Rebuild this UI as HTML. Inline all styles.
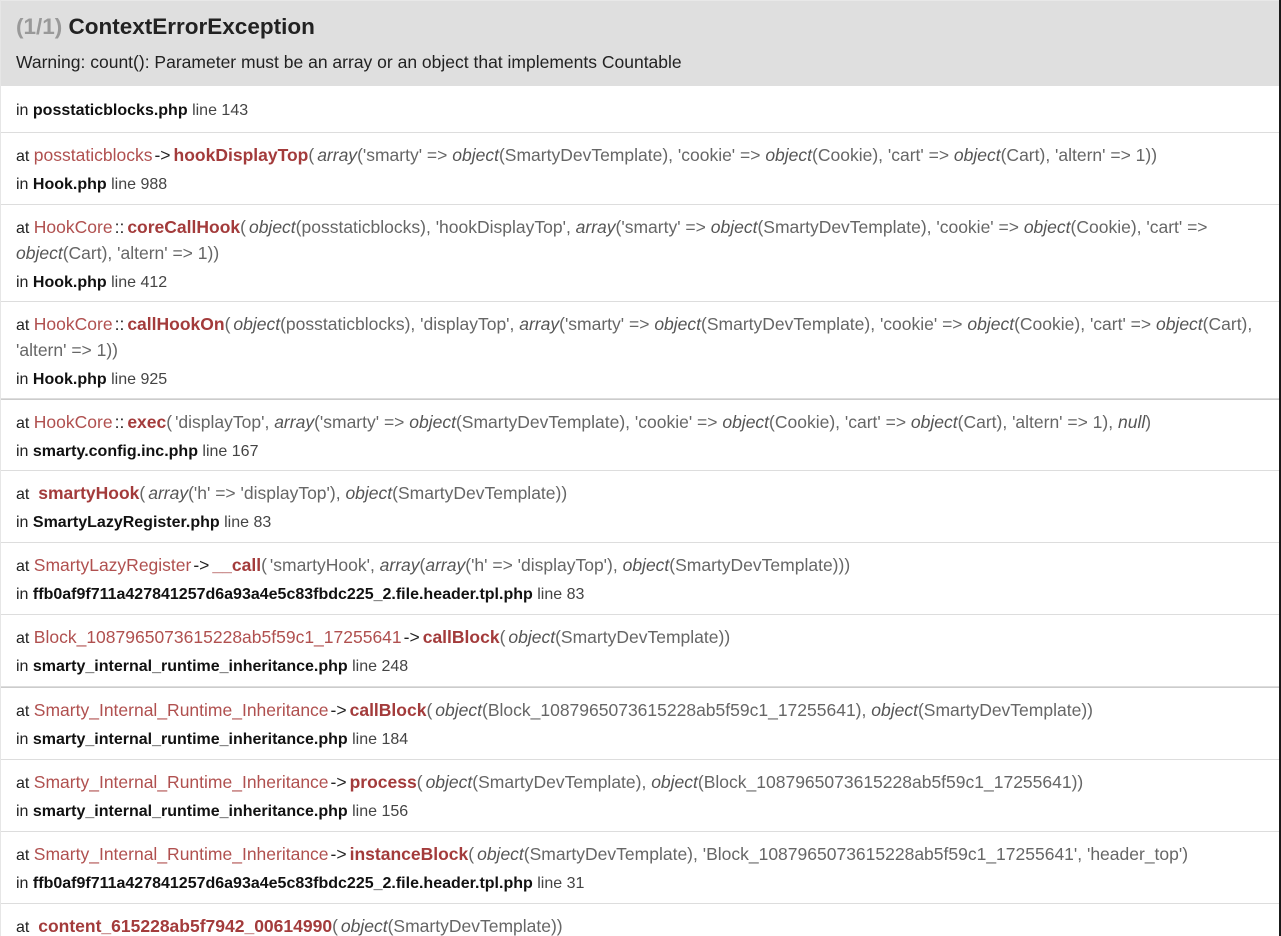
<!DOCTYPE html>
<html><head><meta charset="utf-8"><style>
*{margin:0;padding:0;box-sizing:border-box}
html,body{width:1281px;height:936px;overflow:hidden;background:#fff}
body{font-family:"Liberation Sans",Arial,sans-serif;font-size:16px;color:#222;position:relative}
.wrap{position:absolute;left:0;top:0;width:1281px;height:936px;border-left:1px solid #e6e6e6;border-right:2px solid #1a1a1a}
.hd{height:86px;background:#dfdfdf;padding:12px 0 0 15px;border-top:1px solid #e8e8e8}
.hd h1{font-size:22.5px;font-weight:bold;color:#222;line-height:28px}
.hd h1 span{color:#999}
.hd p{margin-top:10px;font-size:17.5px;line-height:22px;color:#222}
.r{border-bottom:1px solid #ddd;padding:10px 15px 0 15px;line-height:24px;overflow:hidden;white-space:nowrap}
.r .in{margin-top:4px}
.c{color:#b0504f;font-size:17.5px}
.f{color:#a33b3b;font-weight:bold;font-size:17.5px}
.a{color:#666;font-size:17.5px}
.a i{color:#555}
.ar{font-size:17.5px;color:#222;margin:0 3px 0 2px}
.p{margin-right:3px}
b{font-weight:bold;color:#111}
.ln{color:#444}
</style></head><body><div class="wrap">
<div class="hd"><h1><span>(1/1)</span> ContextErrorException</h1><p>Warning: count(): Parameter must be an array or an object that implements Countable</p></div>
<div class="r" style="height:47px;padding-top:13px">in <b>posstaticblocks.php</b> <span class="ln">line 143</span></div>
<div class="r" style="height:72px">at <span class="c">posstaticblocks</span><span class="ar">-&gt;</span><span class="f">hookDisplayTop</span><span class="a"><span class="p">(</span><i>array</i>('smarty' =&gt; <i>object</i>(SmartyDevTemplate), 'cookie' =&gt; <i>object</i>(Cookie), 'cart' =&gt; <i>object</i>(Cart), 'altern' =&gt; 1))</span><div class="in">in <b>Hook.php</b> <span class="ln">line 988</span></div></div>
<div class="r" style="height:97px">at <span class="c">HookCore</span><span class="ar">::</span><span class="f">coreCallHook</span><span class="a"><span class="p">(</span><i>object</i>(posstaticblocks), 'hookDisplayTop', <i>array</i>('smarty' =&gt; <i>object</i>(SmartyDevTemplate), 'cookie' =&gt; <i>object</i>(Cookie), 'cart' =&gt;<br><i>object</i>(Cart), 'altern' =&gt; 1))</span><div class="in">in <b>Hook.php</b> <span class="ln">line 412</span></div></div>
<div class="r" style="height:97px">at <span class="c">HookCore</span><span class="ar">::</span><span class="f">callHookOn</span><span class="a"><span class="p">(</span><i>object</i>(posstaticblocks), 'displayTop', <i>array</i>('smarty' =&gt; <i>object</i>(SmartyDevTemplate), 'cookie' =&gt; <i>object</i>(Cookie), 'cart' =&gt; <i>object</i>(Cart),<br>'altern' =&gt; 1))</span><div class="in">in <b>Hook.php</b> <span class="ln">line 925</span></div></div>
<div class="r" style="height:72px;border-top:1px solid #ccc">at <span class="c">HookCore</span><span class="ar">::</span><span class="f">exec</span><span class="a"><span class="p">(</span>'displayTop', <i>array</i>('smarty' =&gt; <i>object</i>(SmartyDevTemplate), 'cookie' =&gt; <i>object</i>(Cookie), 'cart' =&gt; <i>object</i>(Cart), 'altern' =&gt; 1), <i>null</i>)</span><div class="in">in <b>smarty.config.inc.php</b> <span class="ln">line 167</span></div></div>
<div class="r" style="height:72px">at &nbsp;<span class="f">smartyHook</span><span class="a"><span class="p">(</span><i>array</i>('h' =&gt; 'displayTop'), <i>object</i>(SmartyDevTemplate))</span><div class="in">in <b>SmartyLazyRegister.php</b> <span class="ln">line 83</span></div></div>
<div class="r" style="height:72px">at <span class="c">SmartyLazyRegister</span><span class="ar">-&gt;</span><span class="f">__call</span><span class="a"><span class="p">(</span>'smartyHook', <i>array</i>(<i>array</i>('h' =&gt; 'displayTop'), <i>object</i>(SmartyDevTemplate)))</span><div class="in">in <b>ffb0af9f711a427841257d6a93a4e5c83fbdc225_2.file.header.tpl.php</b> <span class="ln">line 83</span></div></div>
<div class="r" style="height:72px">at <span class="c">Block_1087965073615228ab5f59c1_17255641</span><span class="ar">-&gt;</span><span class="f">callBlock</span><span class="a"><span class="p">(</span><i>object</i>(SmartyDevTemplate))</span><div class="in">in <b>smarty_internal_runtime_inheritance.php</b> <span class="ln">line 248</span></div></div>
<div class="r" style="height:73px;border-top:1px solid #ccc">at <span class="c">Smarty_Internal_Runtime_Inheritance</span><span class="ar">-&gt;</span><span class="f">callBlock</span><span class="a"><span class="p">(</span><i>object</i>(Block_1087965073615228ab5f59c1_17255641), <i>object</i>(SmartyDevTemplate))</span><div class="in">in <b>smarty_internal_runtime_inheritance.php</b> <span class="ln">line 184</span></div></div>
<div class="r" style="height:72px">at <span class="c">Smarty_Internal_Runtime_Inheritance</span><span class="ar">-&gt;</span><span class="f">process</span><span class="a"><span class="p">(</span><i>object</i>(SmartyDevTemplate), <i>object</i>(Block_1087965073615228ab5f59c1_17255641))</span><div class="in">in <b>smarty_internal_runtime_inheritance.php</b> <span class="ln">line 156</span></div></div>
<div class="r" style="height:72px">at <span class="c">Smarty_Internal_Runtime_Inheritance</span><span class="ar">-&gt;</span><span class="f">instanceBlock</span><span class="a"><span class="p">(</span><i>object</i>(SmartyDevTemplate), 'Block_1087965073615228ab5f59c1_17255641', 'header_top')</span><div class="in">in <b>ffb0af9f711a427841257d6a93a4e5c83fbdc225_2.file.header.tpl.php</b> <span class="ln">line 31</span></div></div>
<div class="r" style="height:72px;border-bottom:none">at &nbsp;<span class="f">content_615228ab5f7942_00614990</span><span class="a"><span class="p">(</span><i>object</i>(SmartyDevTemplate))</span></div>
</div></body></html>
